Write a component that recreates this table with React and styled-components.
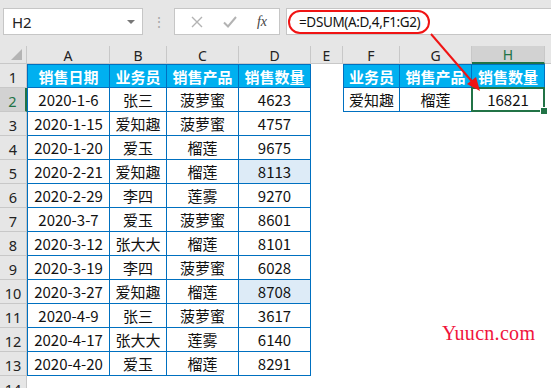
import React from 'react'
import styled, { createGlobalStyle } from 'styled-components'

const GlobalStyle = createGlobalStyle`
    html, body {
        margin: 0;
        padding: 0;
        background: #ffffff;
    }
    body {
        font-family: "Noto Sans", "Noto Sans CJK SC", sans-serif;
    }
`

// column I only peeks in at the right edge, so its letter stays off screen
const columns = ['A', 'B', 'C', 'D', 'E', 'F', 'G', 'H', '']

const sales = [
    ['2020-1-6', '张三', '菠萝蜜', '4623'],
    ['2020-1-15', '爱知趣', '菠萝蜜', '4757'],
    ['2020-1-20', '爱玉', '榴莲', '9675'],
    ['2020-2-21', '爱知趣', '榴莲', '8113', true],
    ['2020-2-29', '李四', '莲雾', '9270'],
    ['2020-3-7', '爱玉', '菠萝蜜', '8601'],
    ['2020-3-12', '张大大', '榴莲', '8101'],
    ['2020-3-19', '李四', '菠萝蜜', '6028'],
    ['2020-3-27', '爱知趣', '榴莲', '8708', true],
    ['2020-4-9', '张三', '菠萝蜜', '3617'],
    ['2020-4-17', '张大大', '莲雾', '6140'],
    ['2020-4-20', '爱玉', '榴莲', '8291'],
]

const headers = ['销售日期', '业务员', '销售产品', '销售数量']

const App = () => {
    return (
        <Page>
            <GlobalStyle />
            <FormulaBar>
                <NameBox>
                    <span>H2</span>
                    <Caret />
                </NameBox>
                <Dots>⋮</Dots>
                <ButtonBox>
                    <svg width="12" height="12" viewBox="0 0 12 12">
                        <path d="M1 1 L11 11 M11 1 L1 11" stroke="#b3b3b3" strokeWidth="1.4" fill="none" />
                    </svg>
                    <svg width="14" height="12" viewBox="0 0 14 12">
                        <path d="M1 6.5 L5 10.5 L13 1" stroke="#b3b3b3" strokeWidth="2" fill="none" />
                    </svg>
                    <Fx>fx</Fx>
                </ButtonBox>
                <FormulaInput>
                    <FormulaText>=DSUM(A:D,4,F1:G2)</FormulaText>
                    <Oval />
                </FormulaInput>
            </FormulaBar>

            <Sheet>
                <Corner><CornerMark /></Corner>
                {columns.map((c, i) => (
                    <ColHead key={i} $active={c === 'H'}>{c}</ColHead>
                ))}

                <RowHead>1</RowHead>
                {headers.map((h, i) => <Cell key={'a' + i} $head $first={i === 0} $top>{h}</Cell>)}
                <Blank />
                {headers.slice(1).map((h, i) => <Cell key={'f' + i} $head $first={i === 0} $top>{h}</Cell>)}
                <Blank />

                {sales.map((row, r) => (
                    <React.Fragment key={r}>
                        <RowHead $active={r === 0}>{r + 2}</RowHead>
                        <Cell $first>{row[0]}</Cell>
                        <Cell>{row[1]}</Cell>
                        <Cell>{row[2]}</Cell>
                        <Cell $fill={row[4]}>{row[3]}</Cell>
                        {r === 0 ? (
                            <>
                                <Blank />
                                <Cell $first>爱知趣</Cell>
                                <Cell>榴莲</Cell>
                                <Cell>
                                    16821
                                    <Selection><Handle /></Selection>
                                </Cell>
                                <Blank />
                            </>
                        ) : (
                            <Blank $span={5} />
                        )}
                    </React.Fragment>
                ))}

                <RowHead>14</RowHead>
                <Blank $span={9} />
            </Sheet>

            <Arrow width="551" height="388" viewBox="0 0 551 388">
                <path d="M431 34 L475 85" stroke="#f01414" strokeWidth="2" fill="none" />
                <path d="M480 91 L467 84 L476 77 Z" fill="#f01414" />
            </Arrow>

            <Watermark>Yuucn.com</Watermark>
        </Page>
    )
}

const Page = styled.div`
    position: relative;
    width: 551px;
    height: 388px;
    overflow: hidden;
    background: #ffffff;
`
const FormulaBar = styled.div`
    display: flex;
    align-items: flex-start;
    height: 46px;
    box-sizing: border-box;
    padding-top: 8px;
    background: #e6e6e6;
`
const NameBox = styled.div`
    display: flex;
    align-items: center;
    justify-content: space-between;
    box-sizing: border-box;
    width: 140px;
    height: 27px;
    margin-left: 3px;
    padding: 0 7px 0 8px;
    background: #ffffff;
    border: 1px solid #c6c6c6;
    font-size: 15px;
    color: #222222;
`
const Caret = styled.span`
    width: 0;
    height: 0;
    border-left: 4px solid transparent;
    border-right: 4px solid transparent;
    border-top: 4px solid #777777;
`
const Dots = styled.span`
    width: 31px;
    text-align: center;
    line-height: 27px;
    font-size: 14px;
    color: #a8a8a8;
`
const ButtonBox = styled.div`
    display: flex;
    align-items: center;
    justify-content: space-around;
    box-sizing: border-box;
    width: 106px;
    height: 27px;
    padding: 0 2px 0 6px;
    background: #ffffff;
    border: 1px solid #c6c6c6;
`
const Fx = styled.span`
    font-family: "Liberation Serif", serif;
    font-style: italic;
    font-size: 14px;
    color: #444444;
`
const FormulaInput = styled.div`
    position: relative;
    flex: 1;
    display: flex;
    align-items: center;
    box-sizing: border-box;
    height: 27px;
    margin-left: 6px;
    padding-left: 12px;
    background: #ffffff;
    border: 1px solid #c6c6c6;
    border-right: none;
`
const FormulaText = styled.span`
    font-size: 13.5px;
    letter-spacing: -0.35px;
    color: #111111;
`
const Oval = styled.span`
    position: absolute;
    left: 1px;
    top: 1px;
    width: 142px;
    height: 24px;
    box-sizing: border-box;
    border: 2px solid #f01414;
    border-radius: 12px;
`
const Sheet = styled.div`
    display: grid;
    grid-template-columns: 27px 83px 57px 72px 72px 32px 57px 72px 73px 73px;
    grid-template-rows: 18px repeat(14, 24px);
`
const Corner = styled.div`
    position: relative;
    background: #e6e6e6;
    border-right: 1px solid #c8c8c8;
    border-bottom: 1px solid #c8c8c8;
    box-sizing: border-box;
`
const CornerMark = styled.span`
    position: absolute;
    right: 4px;
    bottom: 3px;
    width: 0;
    height: 0;
    border-left: 11px solid transparent;
    border-bottom: 11px solid #b4b4b4;
`
const ColHead = styled.div`
    display: flex;
    align-items: center;
    justify-content: center;
    box-sizing: border-box;
    background: ${p => p.$active ? '#d2d2d2' : '#e6e6e6'};
    color: ${p => p.$active ? '#217346' : '#222222'};
    border-right: 1px solid #c8c8c8;
    border-bottom: ${p => p.$active ? '2px solid #217346' : '1px solid #c8c8c8'};
    font-size: 14px;
    padding-top: 1px;
`
const RowHead = styled.div`
    display: flex;
    align-items: flex-end;
    justify-content: center;
    box-sizing: border-box;
    padding-bottom: 1px;
    background: ${p => p.$active ? '#d2d2d2' : '#e6e6e6'};
    color: ${p => p.$active ? '#217346' : '#222222'};
    border-right: ${p => p.$active ? '2px solid #217346' : '1px solid #c8c8c8'};
    border-bottom: 1px solid #c8c8c8;
    font-size: 14.5px;
    line-height: 18px;
`
const Cell = styled.div`
    position: relative;
    display: flex;
    align-items: center;
    justify-content: center;
    box-sizing: border-box;
    background: ${p => p.$head ? '#00b0f0' : p.$fill ? '#ddebf7' : '#ffffff'};
    color: ${p => p.$head ? '#ffffff' : '#111111'};
    font-weight: ${p => p.$head ? 700 : 400};
    font-family: "Noto Sans CJK SC", "Noto Sans", sans-serif;
    font-size: 15px;
    border-right: 1px solid #0070c0;
    border-bottom: 1px solid #0070c0;
    border-left: ${p => p.$first ? '1px solid #0070c0' : 'none'};
    border-top: ${p => p.$top ? '1px solid #0070c0' : 'none'};
`
const Blank = styled.div`
    grid-column: span ${p => p.$span || 1};
    background: #ffffff;
`
const Selection = styled.span`
    position: absolute;
    left: -1px;
    top: -1px;
    right: -1px;
    bottom: -1px;
    border: 2px solid #217346;
`
const Handle = styled.span`
    position: absolute;
    right: -5px;
    bottom: -5px;
    width: 6px;
    height: 6px;
    background: #217346;
    border: 1px solid #ffffff;
`
const Arrow = styled.svg`
    position: absolute;
    left: 0;
    top: 0;
    pointer-events: none;
`
const Watermark = styled.span`
    position: absolute;
    left: 442px;
    top: 322px;
    font-family: "Liberation Serif", "DejaVu Serif", serif;
    font-size: 20px;
    letter-spacing: 0.3px;
    color: #f0143c;
`

export default App
